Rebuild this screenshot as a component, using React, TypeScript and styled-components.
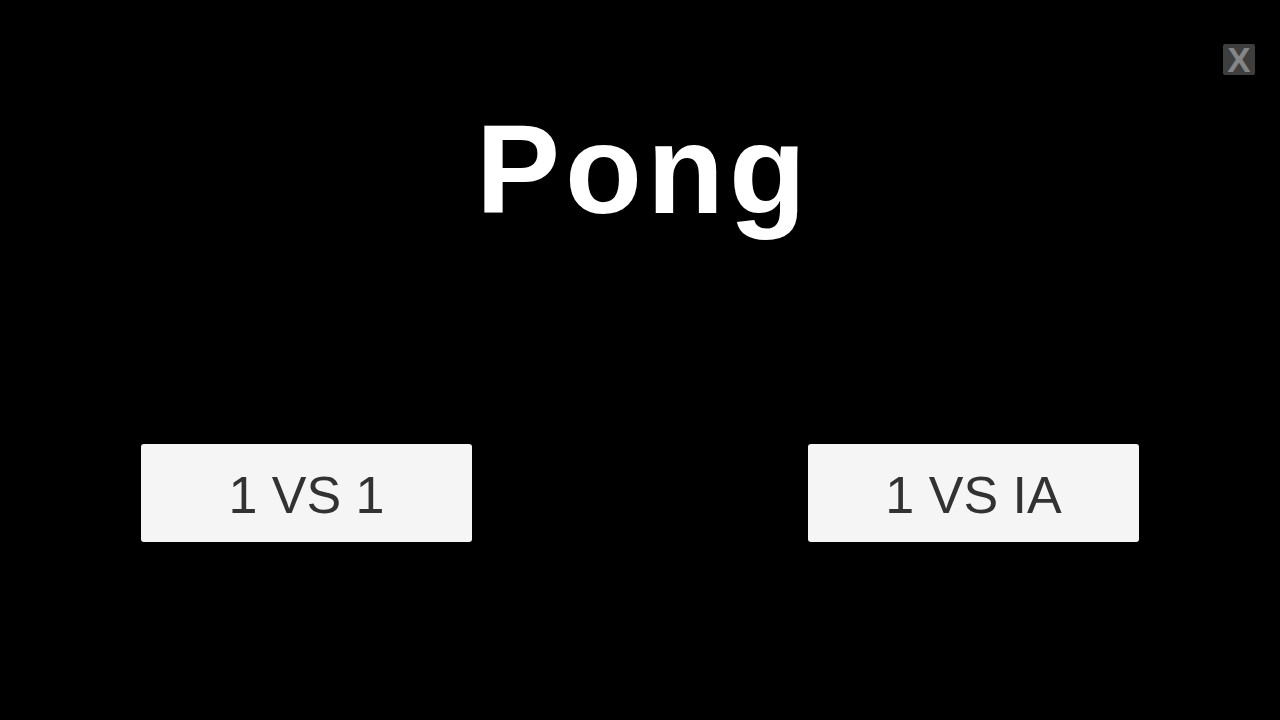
import styled, { createGlobalStyle } from 'styled-components';

const GlobalStyle = createGlobalStyle`
  html, body {
    margin: 0;
    padding: 0;
    background: #000000;
  }
  body {
    font-family: "Liberation Sans", Arial, sans-serif;
  }
`;

// ANCHOR Screen
const StyledScreen = styled.div`
  position: relative;
  width: 1280px;
  height: 720px;
  background-color: #000000;
  display: flex;
  flex-direction: column;
  align-items: center;
  overflow: hidden;
`;

// ANCHOR Title
const StyledTitle = styled.h1`
  margin: 107px 0 0 0;
  padding-left: 7px;
  font-size: 126px;
  line-height: 126px;
  font-weight: 700;
  letter-spacing: 5px;
  color: #ffffff;
`;

// ANCHOR Buttons
const StyledButtonRow = styled.div`
  width: 100%;
  box-sizing: border-box;
  margin-top: 211px;
  padding: 0 141px;
  display: flex;
  justify-content: space-between;
`;

const StyledModeButton = styled.button`
  width: 331px;
  height: 98px;
  padding: 3px 0 0 0;
  border: none;
  border-radius: 3px;
  background-color: #f5f5f5;
  color: #323232;
  font-family: "Liberation Sans", Arial, sans-serif;
  font-size: 52px;
  display: flex;
  align-items: center;
  justify-content: center;
  cursor: pointer;
`;

// ANCHOR Close
const StyledCloseButton = styled.button`
  position: absolute;
  top: 44px;
  left: 1223px;
  width: 32px;
  height: 31px;
  padding: 0;
  border: none;
  border-radius: 2px;
  background-color: #3e3e3e;
  color: #858585;
  font-family: "Liberation Sans", Arial, sans-serif;
  font-size: 35px;
  font-weight: 700;
  line-height: 31px;
  display: flex;
  align-items: center;
  justify-content: center;
  cursor: pointer;
`;

export default function App() {
  return (
    <>
      <GlobalStyle />
      <StyledScreen>
        <StyledCloseButton>X</StyledCloseButton>
        <StyledTitle>Pong</StyledTitle>
        <StyledButtonRow>
          <StyledModeButton>1 VS 1</StyledModeButton>
          <StyledModeButton>1 VS IA</StyledModeButton>
        </StyledButtonRow>
      </StyledScreen>
    </>
  );
}
